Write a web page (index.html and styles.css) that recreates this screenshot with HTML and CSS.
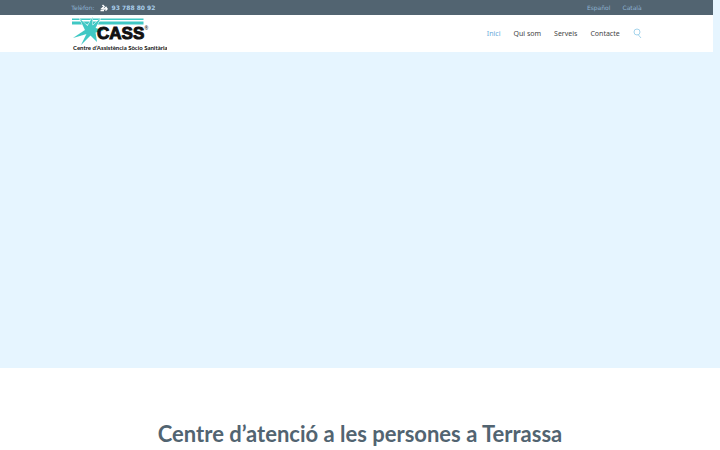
FILE: index.html
```html
<!DOCTYPE html>
<html lang="ca">
<head>
<meta charset="utf-8">
<meta name="viewport" content="width=device-width, initial-scale=1">
<title>CASS</title>
<link rel="stylesheet" href="styles.css">
</head>
<body>
<header class="site-header">
  <div class="topbar">
    <div class="container topbar-row">
      <p class="phone">
        <span>Telèfon:</span>
        <svg class="phone-icon" viewBox="0 0 16 16" aria-hidden="true"><path class="waves" d="M5 2 8 5 4 9 9 10 12 7 14 10 11 13M1 13H8"/></svg>
        <strong>93 788 80 92</strong>
      </p>
      <nav class="languages" aria-label="Idioma">
        <a href="#es">Español</a>
        <a href="#ca">Català</a>
      </nav>
    </div>
  </div>
  <div class="mainbar">
    <div class="container main-row">
      <a class="logo" href="#inici">
        <svg viewBox="0 0 192 72" role="img" aria-label="CASS">
          <g class="logo-mark">
            <path d="M2 5H145V8H2ZM2 11H145V17H2Z"/>
            <path class="star-edge" d="M17 5 33 20 43 2 43 19 59 5 49 24 66 29 49 33 52 52 39 39 20 58 31 36 4 44 28 28Z"/>
            <path d="M17 5 33 20 43 2 43 19 59 5 49 24 66 29 49 33 52 52 39 39 20 58 31 36 4 44 28 28Z"/>
          </g>
          <text class="logo-name" x="52" y="46">CASS</text>
          <text class="logo-reg" x="147" y="27">®</text>
          <text class="logo-caption" x="4" y="67">Centre d’Assistència Sòcio Sanitària</text>
        </svg>
      </a>
      <nav class="menu" aria-label="Principal">
        <a class="active" href="#inici">Inici</a>
        <a href="#qui-som">Qui som</a>
        <a href="#serveis">Serveis</a>
        <a href="#contacte">Contacte</a>
        <button class="search" type="button" aria-label="Cerca">
          <svg viewBox="0 0 10 11" aria-hidden="true"><circle cx="4" cy="4" r="3"/><path d="M5 6.500 8 10"/></svg>
        </button>
      </nav>
    </div>
  </div>
</header>
<main>
  <div class="hero"></div>
  <section class="intro">
    <h1>Centre d’atenció a les persones a Terrassa</h1>
  </section>
</main>
</body>
</html>
```
FILE: styles.css
```css
* { box-sizing: border-box; }
body {
  margin: 0;
  background: #fff;
  font-family: Lato, "Noto Sans", sans-serif;
  color: #444;
}
a { color: inherit; text-decoration: none; }
.site-header { padding-right: 7px; background: #e6f5ff; }
.container { width: 80%; margin: 0 auto; }
.topbar {
  background: #526471;
  color: #8fb3d1;
  font: 6px/15px "DejaVu Sans", sans-serif;
}
.topbar-row, .main-row {
  display: flex;
  align-items: center;
  justify-content: space-between;
}
.phone { display: flex; align-items: center; gap: 4px; margin: 0; }
.phone strong { color: #a9cdea; }
.phone-icon { width: 8px; height: 8px; margin-left: 1px; }
.waves { fill: none; stroke: #fff; stroke-width: 3; }
.languages { display: flex; gap: 12px; }
.mainbar { background: #fff; }
.main-row { height: 37px; }
.logo svg { display: block; width: 96px; height: 36px; }
.logo-mark { fill: #40c8c4; }
.star-edge { stroke: #fff; stroke-width: 2; }
.logo-name { font: bold 34px "Liberation Sans", sans-serif; fill: #111; stroke: #111; stroke-width: 2; }
.logo-reg { font: bold 10px "Liberation Sans", sans-serif; fill: #333; }
.logo-caption { font: bold 12px Lato, sans-serif; fill: #111; }
.menu { display: flex; align-items: center; gap: 13px; font: 7px/12px "Noto Sans", sans-serif; }
.menu .active { color: #69aadb; }
.search { width: 9px; padding: 0; border: 0; background: none; }
.search svg { display: block; width: 10px; height: 11px; fill: none; stroke: #a5d4ec; stroke-width: 1; }
.hero { height: 316px; background: #e6f5ff; }
.intro { padding: 50px 20px 0; text-align: center; }
h1 { margin: 0; font-size: 22px; line-height: 32px; color: #526471; }
```
